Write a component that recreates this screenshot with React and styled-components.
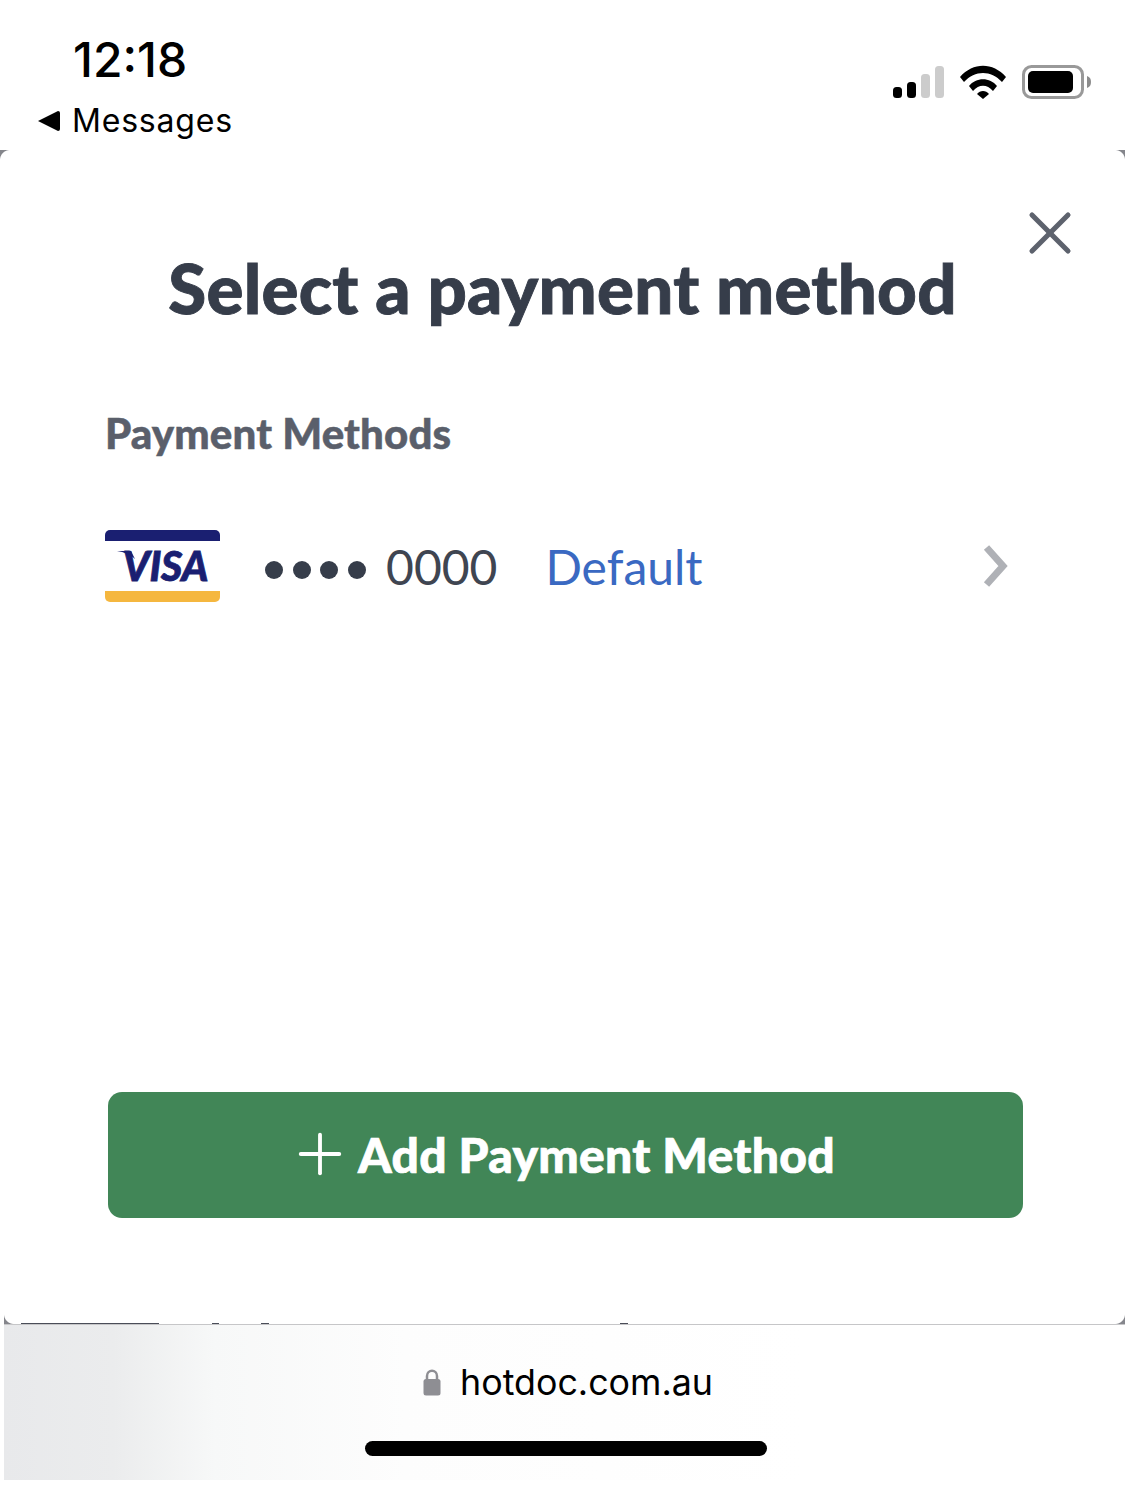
import styled, { createGlobalStyle } from "styled-components";
import { X, Plus } from "lucide-react";

const GlobalStyle = createGlobalStyle`
  html, body {
    margin: 0;
    padding: 0;
    background: #fff;
  }
  * {
    box-sizing: border-box;
  }
`;

const Page = styled.div`
  width: 1125px;
  height: 1497px;
  overflow: hidden;
  display: flex;
  flex-direction: column;
  background: #fff;
`;

const StatusBar = styled.header`
  height: 150px;
  flex: none;
  display: flex;
  justify-content: space-between;
  font-family: "Inter", "Liberation Sans", sans-serif;
  color: #000;
`;

const StatusLeft = styled.div`
  display: flex;
  flex-direction: column;
  padding: 32px 0 0 38px;
`;

const Time = styled.div`
  font-size: 48px;
  line-height: 56px;
  font-weight: 500;
  margin-left: 35px;
`;

const BackLink = styled.div`
  display: flex;
  align-items: center;
  gap: 12px;
  margin-top: 10px;
  font-size: 32px;
  line-height: 46px;
  letter-spacing: 0.8px;
`;

const StatusIcons = styled.div`
  display: flex;
  align-items: flex-start;
  gap: 16px;
  padding: 65px 33px 0 0;
`;

const Sheet = styled.main`
  position: relative;
  height: 1174px;
  flex: none;
  display: flex;
  flex-direction: column;
  padding: 0 102px 106px 106px;
  font-family: "Lato", "Liberation Sans", sans-serif;
  background: #fff;
`;

const Corner = styled.i`
  position: absolute;
  width: 10px;
  height: 10px;
  ${(p) => (p.$bottom ? "bottom: 0;" : "top: 0;")}
  ${(p) => (p.$right ? "right: 0;" : `left: ${p.$bottom ? 4 : 0}px;`)}
  background: radial-gradient(
    circle at ${(p) => (p.$right ? "0" : "100%")} ${(p) => (p.$bottom ? "0" : "100%")},
    transparent 9.5px,
    #85868c 10.5px
  );
`;

const Glitch = styled.i`
  position: absolute;
  bottom: 0;
  left: ${(p) => p.$left}px;
  width: ${(p) => p.$width}px;
  height: 1px;
  background: #4a4d58;
`;

const CloseButton = styled.button`
  position: absolute;
  top: 47px;
  right: 39px;
  width: 72px;
  height: 72px;
  padding: 0;
  display: flex;
  align-items: center;
  justify-content: center;
  border: 0;
  background: none;
  color: #5d626d;
`;

const Title = styled.h1`
  margin: 92px 4px 0 0;
  font-size: 69px;
  line-height: 92px;
  font-weight: 900;
  text-align: center;
  color: #363d4a;
  letter-spacing: 0.25px;
  -webkit-text-stroke: 0.9px #363d4a;
`;

const SectionLabel = styled.h2`
  margin: 72px 0 0 -1px;
  font-size: 42px;
  line-height: 54px;
  font-weight: 900;
  color: #5a5f6b;
  letter-spacing: 0.13px;
  -webkit-text-stroke: 0.5px #5a5f6b;
`;

const MethodRow = styled.div`
  display: flex;
  align-items: center;
  margin: 70px 0 0 -1px;
  height: 72px;
`;

const VisaCard = styled.div`
  position: relative;
  width: 115px;
  height: 72px;
  flex: none;
  display: flex;
  flex-direction: column;
  justify-content: space-between;
  align-items: center;
`;

const VisaBand = styled.span`
  height: 11px;
  width: 100%;
  background: ${(p) => p.$color};
  border-radius: ${(p) => (p.$top ? "5px 5px 0 0" : "0 0 5px 5px")};
`;

const VisaText = styled.span`
  font-family: "Lato", "Liberation Sans", sans-serif;
  font-size: 41px;
  line-height: 40px;
  font-weight: 900;
  font-style: italic;
  letter-spacing: -0.2px;
  color: #1a1f71;
  margin-left: 6px;
  -webkit-text-stroke: 0.8px #1a1f71;
`;

const VisaFlag = styled.svg`
  position: absolute;
  left: 12px;
  top: 21px;
`;

const Dots = styled.div`
  display: flex;
  gap: 9.7px;
  margin: 8px 0 0 45px;
`;

const Dot = styled.span`
  width: 18px;
  height: 18px;
  border-radius: 50%;
  background: #363d4a;
`;

const CardNumber = styled.span`
  margin-left: 20px;
  font-size: 48px;
  color: #3f4551;
`;

const DefaultTag = styled.span`
  margin-left: 48px;
  font-size: 48px;
  color: #3a69c2;
`;

const RowChevron = styled.svg`
  margin: 0 14px 0 auto;
`;

const AddButton = styled.button`
  margin: auto 0 0 2px;
  height: 126px;
  width: 915px;
  flex: none;
  display: flex;
  align-items: center;
  justify-content: center;
  gap: 5px;
  padding: 0 9px 2px 0;
  border: 0;
  border-radius: 14px;
  background: #418657;
  color: #fff;
  font-family: inherit;
  font-size: 48px;
  font-weight: 900;
  letter-spacing: 0.3px;
  -webkit-text-stroke: 0.7px #fff;
`;

const BrowserBar = styled.footer`
  position: relative;
  height: 156px;
  margin-left: 4px;
  flex: none;
  display: flex;
  flex-direction: column;
  align-items: center;
  padding-top: 36px;
  border-top: 1px solid #c6c6c8;
  background: linear-gradient(90deg, #e8e9eb 0, #ebeced 110px, #f7f8f8 210px, #fdfdfd 400px, #fff 800px);
  font-family: "Inter", "Liberation Sans", sans-serif;
`;

const UrlRow = styled.div`
  display: flex;
  align-items: center;
  gap: 19px;
  margin-left: 7px;
  font-size: 35.8px;
  line-height: 42px;
  color: #000;
`;

const HomeIndicator = styled.div`
  position: absolute;
  top: 116px;
  left: 361px;
  width: 402px;
  height: 15px;
  border-radius: 8px;
  background: #000;
`;

const SignalIcon = () => (
  <svg width="51" height="34" viewBox="0 0 51 34">
    <rect x="0" y="22" width="9" height="11" rx="3.5" fill="#000" />
    <rect x="14" y="17" width="9" height="16" rx="3.5" fill="#000" />
    <rect x="28" y="9" width="9" height="24" rx="3.5" fill="#ccc" />
    <rect x="42" y="1" width="9" height="32" rx="3.5" fill="#ccc" />
  </svg>
);

const WifiIcon = () => (
  <svg width="46" height="34" viewBox="0 0 46 34">
    <path d="M0 12 C13 -3 33 -3 46 12 L42 17 C31 5 15 5 4 17 Z" fill="#000" />
    <path d="M9 21 C16 12 30 12 37 21 L33 26 C27 19 19 19 13 26 Z" fill="#000" />
    <path d="M17 29 C20 25 26 25 29 29 L23 34 Z" fill="#000" />
  </svg>
);

const BatteryIcon = () => (
  <svg width="70" height="35" viewBox="0 0 70 35">
    <rect x="1.5" y="1.5" width="59" height="31" rx="8" fill="none" stroke="#999" strokeWidth="3" />
    <rect x="6" y="6" width="45" height="22" rx="5" fill="#000" />
    <path d="M65 11 C68 12 69 14 69 17 C69 20 68 22 65 23 Z" fill="#8c8c8c" />
  </svg>
);

const BackArrow = () => (
  <svg width="22" height="20" viewBox="0 0 22 20">
    <path d="M0 10 L20 0 Q22 0 22 2 L22 18 Q22 20 20 20 Z" fill="#000" />
  </svg>
);

const LockIcon = () => (
  <svg width="18" height="28" viewBox="0 0 18 28">
    <path d="M4 12 V8 C4 1 14 1 14 8 V12" fill="none" stroke="#8e8e93" strokeWidth="2.5" />
    <rect x="0.5" y="11" width="17" height="16.5" rx="2.5" fill="#8e8e93" />
  </svg>
);

export default function App() {
  return (
    <Page>
      <GlobalStyle />
      <StatusBar>
        <StatusLeft>
          <Time>12:18</Time>
          <BackLink>
            <BackArrow />
            Messages
          </BackLink>
        </StatusLeft>
        <StatusIcons>
          <SignalIcon />
          <WifiIcon />
          <BatteryIcon />
        </StatusIcons>
      </StatusBar>

      <Sheet>
        <Corner />
        <Corner $right />
        <Corner $bottom />
        <Corner $bottom $right />
        <Glitch $left={21} $width={138} />
        <Glitch $left={212} $width={7} />
        <Glitch $left={261} $width={8} />
        <Glitch $left={620} $width={8} />

        <CloseButton aria-label="Close">
          <X size={72} strokeWidth={1.7} />
        </CloseButton>

        <Title>Select a payment method</Title>
        <SectionLabel>Payment Methods</SectionLabel>

        <MethodRow>
          <VisaCard>
            <VisaBand $top $color="#1a1f71" />
            <VisaText>VISA</VisaText>
            <VisaFlag width="20" height="8" viewBox="0 0 20 8">
              <path d="M0 0 H14 L18 8 C14 4 7 1 0 0 Z" fill="#1a1f71" />
            </VisaFlag>
            <VisaBand $color="#f5b73f" />
          </VisaCard>
          <Dots>
            <Dot />
            <Dot />
            <Dot />
            <Dot />
          </Dots>
          <CardNumber>0000</CardNumber>
          <DefaultTag>Default</DefaultTag>
          <RowChevron width="26" height="44" viewBox="0 0 26 44">
            <path d="M3.5 3.5 L20 22 L3.5 40.5" fill="none" stroke="#afb1b6" strokeWidth="7" />
          </RowChevron>
        </MethodRow>

        <AddButton>
          <Plus size={66} strokeWidth={1.4} />
          Add Payment Method
        </AddButton>
      </Sheet>

      <BrowserBar>
        <UrlRow>
          <LockIcon />
          hotdoc.com.au
        </UrlRow>
        <HomeIndicator />
      </BrowserBar>
    </Page>
  );
}
